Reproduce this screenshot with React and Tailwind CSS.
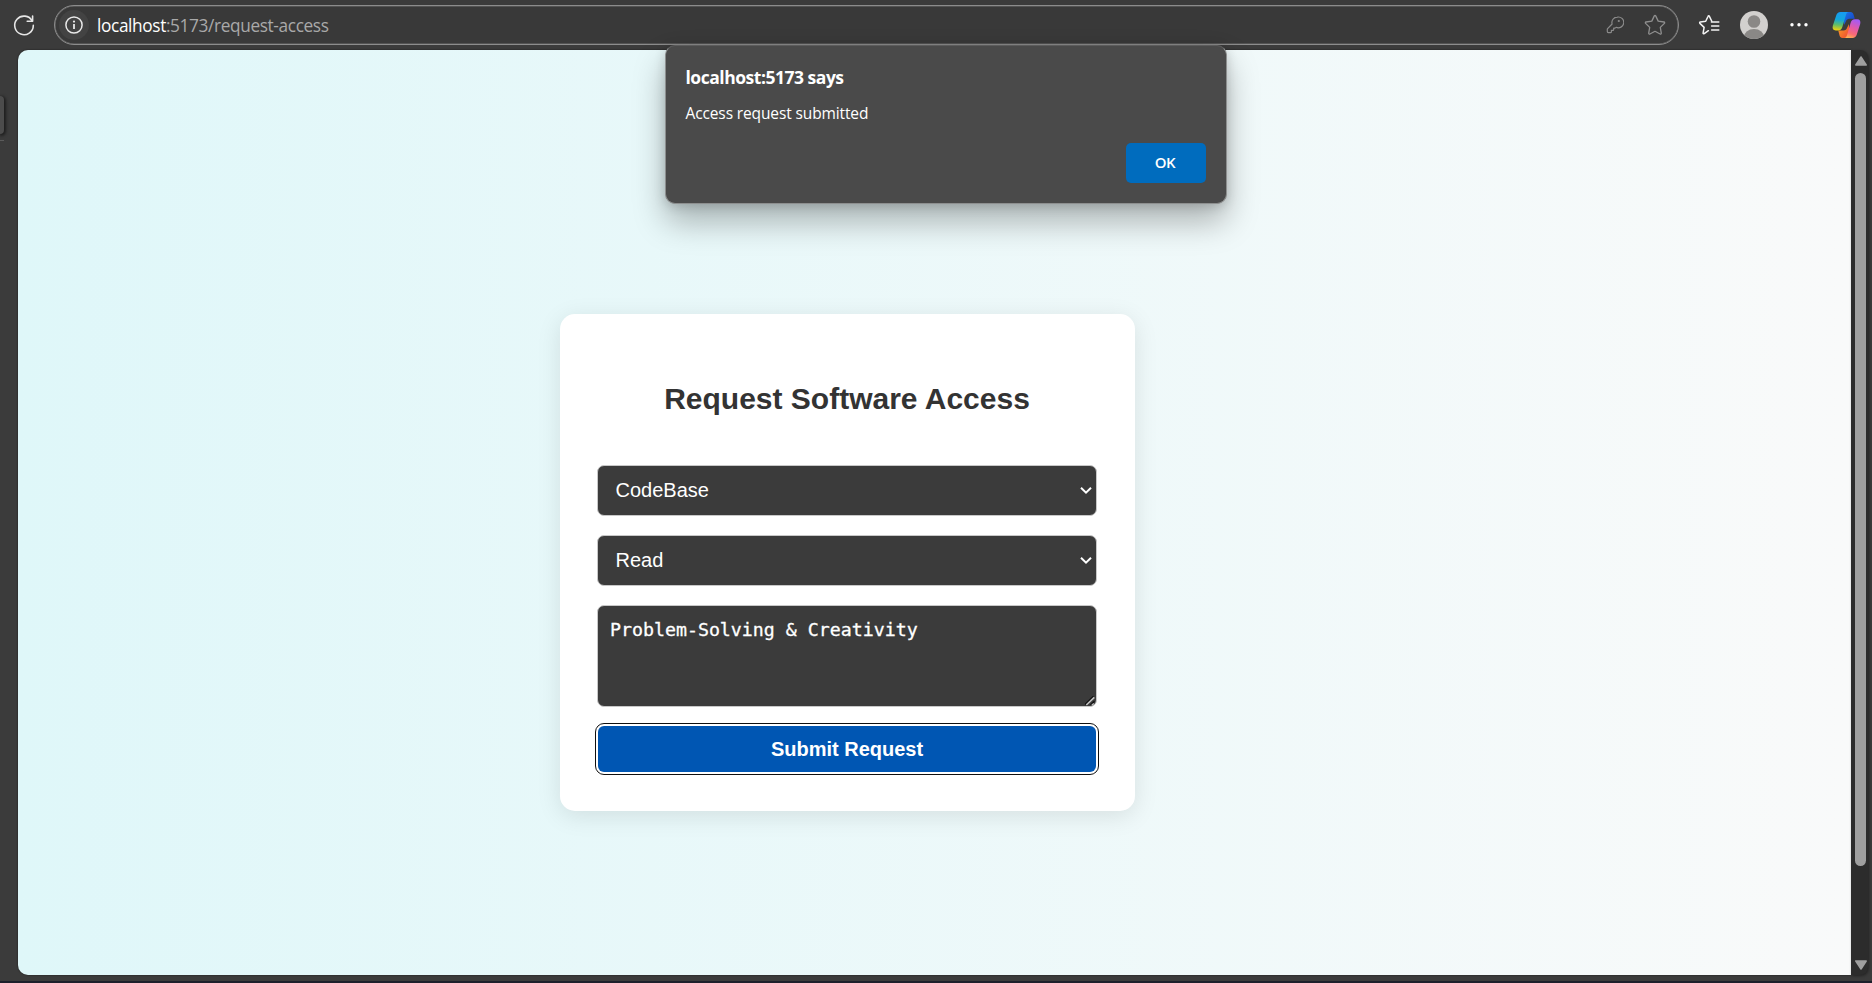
import React from "react";

function RefreshIcon() {
  return (
    <svg className="h-6 w-6 text-[#e6e6e6]" viewBox="0 0 24 24" fill="none" stroke="currentColor" strokeWidth="1.6" strokeLinecap="round" strokeLinejoin="round">
      <path d="M20.2 8A9.3 9.3 0 1 0 21.3 12.4" />
      <path d="M20.6 3v5.2h-5.4" />
    </svg>
  );
}

function InfoIcon() {
  return (
    <svg className="h-5 w-5" viewBox="0 0 20 20" fill="none" stroke="#e8e8e8" strokeWidth="1.5">
      <circle cx="10" cy="10" r="8.1" />
      <path d="M10 9v5" strokeWidth="1.8" />
      <circle cx="10" cy="6.6" r="1.1" fill="#e8e8e8" stroke="none" />
    </svg>
  );
}

function KeyIcon() {
  return (
    <svg className="h-[18px] w-[18px]" viewBox="0 0 18 18" fill="none" stroke="#8b8b8b" strokeWidth="1.2" strokeLinejoin="round">
      <path d="M11.3 1.1a5.4 5.4 0 0 0-5.2 6.9L1.6 12.6a1 1 0 0 0-.3.7v2.3c0 .6.4 1 1 1h2.2c.6 0 .9-.4.9-.9v-1.3h1.4c.5 0 .9-.4.9-.9v-1.4h1.1c.4 0 .6-.1.9-.4l.4-.4A5.4 5.4 0 1 0 11.3 1.1Z" />
      <circle cx="12.8" cy="5" r="1.1" fill="#8b8b8b" stroke="none" />
    </svg>
  );
}

function StarIcon() {
  return (
    <svg className="h-[22px] w-[22px]" viewBox="0 0 22 22" fill="none" stroke="#8f8f8f" strokeWidth="1.3" strokeLinejoin="round">
      <path d="M10.3 1.9a.8.8 0 0 1 1.4 0l2.5 5.2 5.8.9c.7.1.9.9.4 1.4l-4.1 4 1 5.8c.1.6-.6 1.100-1.200.8L11 17.300 5.900 20c-.6.3-1.300-.2-1.200-.8l1-5.800-4.100-4c-.5-.5-.3-1.300.4-1.400l5.800-.9Z" />
    </svg>
  );
}

function FavoritesIcon() {
  return (
    <svg className="h-[22px] w-[22px]" viewBox="0 0 22 22" fill="none" stroke="#f4f4f4" strokeWidth="1.5" strokeLinecap="round" strokeLinejoin="round">
      <path d="M10.400 16.700 6.200 19.700c-.6.3-1.200-.1-1.100-.7l1-5.600-4.200-4c-.5-.5-.2-1.200.4-1.300l5.400-.8 2.400-5c.2-.6 1-.6 1.300 0l2.400 5" />
      <path d="M13.400 8h7.400M13.600 12h7.200M13.600 16h7.200" />
    </svg>
  );
}

function Avatar() {
  return (
    <svg className="h-7 w-7" viewBox="0 0 28 28">
      <defs>
        <clipPath id="avatar-clip"><circle cx="14" cy="14" r="14" /></clipPath>
      </defs>
      <g clipPath="url(#avatar-clip)">
        <rect width="28" height="28" fill="#d2d0ce" />
        <circle cx="14" cy="10.500" r="6.300" fill="#8a8886" />
        <ellipse cx="14" cy="26.500" rx="10.300" ry="8.500" fill="#8a8886" />
      </g>
    </svg>
  );
}

function CopilotIcon() {
  return (
    <svg className="h-7 w-[29px]" viewBox="0 0 29 28">
      <defs>
        <linearGradient id="cp-left" x1="0.4" y1="0" x2="0.3" y2="1">
          <stop offset="0" stopColor="#179bf3" />
          <stop offset="0.400" stopColor="#12a6dc" />
          <stop offset="0.700" stopColor="#61bd69" />
          <stop offset="1" stopColor="#f2d20c" />
        </linearGradient>
        <linearGradient id="cp-right" x1="0.650" y1="0" x2="0.300" y2="1">
          <stop offset="0" stopColor="#a45af5" />
          <stop offset="0.450" stopColor="#e45aa6" />
          <stop offset="0.750" stopColor="#fa6b75" />
          <stop offset="1" stopColor="#ffb152" />
        </linearGradient>
        <linearGradient id="cp-top" x1="0" y1="0" x2="1" y2="1">
          <stop offset="0" stopColor="#1b76e8" />
          <stop offset="1" stopColor="#1739bd" />
        </linearGradient>
        <linearGradient id="cp-bottom" x1="0" y1="0" x2="1" y2="1">
          <stop offset="0" stopColor="#f7a426" />
          <stop offset="1" stopColor="#f04732" />
        </linearGradient>
      </defs>
      <path d="M12 1h6.500c1.700 0 2.500 1 3 2.500l1.300 4.300H17.500c-2 0-3 .8-3.600 2.700L12 14Z" fill="url(#cp-top)" />
      <path d="M17 27h-6.500c-1.700 0-2.500-1-3-2.500L6.300 19.400h5.200c2 0 3-.8 3.600-2.700L17 13Z" fill="url(#cp-bottom)" />
      <path d="M8.500 1H17c-1.700 0-2.500 1.100-3 2.700L10.500 15.500c-.7 2.500-2 3.900-4.500 3.900H3.800c-2.600 0-3.700-1.900-3-4.700L4.200 4.500C4.900 2.200 6.300 1 8.500 1Z" fill="url(#cp-left)" />
      <path d="M20.500 27H12c1.700 0 2.500-1.100 3-2.700l3.500-12.100c.7-2.500 2-4 4.500-4h2.200c2.600 0 3.700 1.900 3 4.700l-3.400 10.600c-.7 2.300-2.100 3.500-4.300 3.500Z" fill="url(#cp-right)" />
    </svg>
  );
}

function Toolbar() {
  return (
    <header className="flex h-[50px] shrink-0 items-start pl-3">
      <div className="mt-[13px]"><RefreshIcon /></div>
      <div className="mt-[5px] ml-[18px] flex h-10 w-[1625px] items-center rounded-full border border-[#8c8c8c] bg-[#393939] pl-1 shadow-[inset_0_0_0_0.5px_#6f6f6f]">
        <span className="flex h-[30px] w-[30px] items-center justify-center rounded-full bg-[#434343]"><InfoIcon /></span>
        <span className="ml-[8px] pt-px font-['Open_Sans',sans-serif] text-[17.250px] leading-none tracking-[-0.370px] text-[#a9a9a9]">
          <span className="text-white">localhost</span>:5173/request-access
        </span>
        <span className="ml-auto flex items-center gap-5 pr-3">
          <KeyIcon />
          <StarIcon />
        </span>
      </div>
      <div className="mt-[14px] ml-[19px]"><FavoritesIcon /></div>
      <div className="mt-[11px] ml-[20px]"><Avatar /></div>
      <svg className="mt-[22px] ml-[22px] h-[6px] w-[18px]" viewBox="0 0 18 6" fill="#fff">
        <circle cx="2" cy="2.800" r="1.700" /><circle cx="9" cy="2.800" r="1.700" /><circle cx="16" cy="2.800" r="1.700" />
      </svg>
      <div className="mt-[11px] ml-[24px]"><CopilotIcon /></div>
    </header>
  );
}

function SelectField({ value }) {
  return (
    <div className="relative">
      <select defaultValue={value} className="block h-[51px] w-full appearance-none rounded-[7px] border border-[#c8c8c8] bg-[#3b3b3b] pb-px pl-[17.5px] font-['Liberation_Sans',sans-serif] text-[20px] text-white">
        <option>{value}</option>
      </select>
      <svg className="absolute top-[21px] right-[5px] h-[9px] w-3" viewBox="0 0 12 9" fill="none" stroke="#fff" strokeWidth="2">
        <path d="M1 1.800 6 6.600l5-4.800" />
      </svg>
    </div>
  );
}

function RequestCard() {
  return (
    <form className="mt-[264px] ml-[542px] flex h-[497px] w-[575px] flex-col rounded-[15px] bg-white pr-[38px] pl-[37px] shadow-[0_5px_25px_rgba(0,0,0,0.1)]">
      <h2 className="mt-[67px] text-center font-['Liberation_Sans',sans-serif] text-[30px] leading-[36px] font-bold text-[#333]">Request Software Access</h2>
      <div className="mt-[48px] flex flex-col gap-[19px]">
        <SelectField value="CodeBase" />
        <SelectField value="Read" />
        <div className="relative">
          <textarea defaultValue="Problem-Solving & Creativity" className="block h-[102px] w-full resize-none rounded-[7px] border border-[#c8c8c8] bg-[#3b3b3b] pt-[12px] pr-[13px] pl-[12px] font-['DejaVu_Sans_Mono',monospace] text-[18.250px] leading-[24px] text-white [-webkit-text-stroke:0.3px_#fff]" />
          <svg className="absolute right-[2px] bottom-[1px] h-[10px] w-[10px]" viewBox="0 0 10 10" fill="none">
            <path d="M0 8.500 8.500.2M5.500 9 9.500 5.300" stroke="#111" strokeWidth="1.300" />
            <path d="M1.300 9 9.300 1.300" stroke="#c4c4c4" strokeWidth="1.600" />
            <path d="M6.800 9.300 8.800 7.500" stroke="#c4c4c4" strokeWidth="1.200" />
          </svg>
        </div>
      </div>
      <button type="button" className="mx-px mt-[19px] h-[46px] shrink-0 rounded-[6px] bg-[#0056b3] text-center font-['Liberation_Sans',sans-serif] text-[20px] leading-[46px] font-bold text-white outline-1 outline-offset-2 outline-[#101010]">
        Submit Request
      </button>
    </form>
  );
}

function Scrollbar() {
  return (
    <div className="flex w-[17px] flex-col items-center rounded-r-[8px] bg-[#2c2c2c] pl-[2px] shadow-[1px_1px_3px_rgba(0,0,0,0.4)]">
      <svg className="mt-[6px] h-[10px] w-3" viewBox="0 0 12 10" fill="#9f9f9f" stroke="#9f9f9f" strokeWidth="1.500" strokeLinejoin="round">
        <path d="M6 1 11.200 9H.8Z" />
      </svg>
      <div className="mt-[7px] h-[793px] w-[11px] rounded-full bg-[#9f9f9f]" />
      <svg className="mt-auto mb-[5px] h-[10px] w-3" viewBox="0 0 12 10" fill="#9f9f9f" stroke="#9f9f9f" strokeWidth="1.500" strokeLinejoin="round">
        <path d="M6 9 .8 1h10.400Z" />
      </svg>
    </div>
  );
}

function AlertDialog() {
  return (
    <div role="alertdialog" className="absolute top-[45px] left-[665px] flex h-[159px] w-[562px] flex-col rounded-[10px] border border-[#8d8f8f] border-t-[#5c5c5c] bg-[#4a4a4a] pt-[17px] pr-5 pl-[19.5px] font-['Open_Sans',sans-serif] text-white shadow-[0_18px_32px_rgba(0,0,0,0.28),0_2px_12px_rgba(0,0,0,0.16)]">
      <p className="text-[17.500px] leading-[28px] font-bold tracking-[-0.480px]">localhost:5173 says</p>
      <p className="mt-[10px] text-[15.500px] leading-[24px] tracking-[-0.120px]">Access request submitted</p>
      <button type="button" className="mt-[18px] h-10 w-20 self-end rounded-[5px] bg-[#006cbe] pr-[2px] pb-[2px] text-[15px] leading-[38px] font-semibold tracking-[-0.400px]">OK</button>
    </div>
  );
}

export default function App() {
  return (
    <div className="relative flex h-[983px] w-[1872px] flex-col overflow-hidden bg-[#3b3b3b]">
      <Toolbar />
      <div className="flex h-[925px] shrink-0">
        <aside className="w-[18px] pt-[46px]">
          <div className="h-[38px] w-1 rounded-r-[6px] bg-[#4c4c4c] shadow-[1px_1px_3px_1px_rgba(0,0,0,0.5)]" />
          <div className="mt-[6px] h-px w-1 bg-[#5b5b5b]" />
        </aside>
        <main className="flex w-[1833px] items-start rounded-l-[10px] bg-[linear-gradient(to_right,#dff7f9,#f9fafa)] shadow-[0_0_2px_rgba(0,0,0,0.6)]">
          <RequestCard />
        </main>
        <Scrollbar />
      </div>
      <div className="mt-auto h-[2px] bg-[#1c1f2b]" />
      <AlertDialog />
    </div>
  );
}
